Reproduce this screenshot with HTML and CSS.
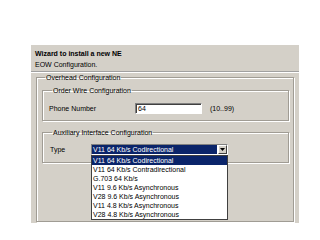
FILE: index.html
```html
<!DOCTYPE html>
<html>
<head>
<meta charset="utf-8">
<link rel="stylesheet" href="styles.css">
</head>
<body>
<div class="panel">
  <div class="header">
    <div class="title">Wizard to install a new NE</div>
    <div class="sub">EOW Configuration.</div>
  </div>
  <div class="sep"></div>
  <fieldset class="group outer">
    <legend>Overhead Configuration</legend>
    <fieldset class="group inner first">
      <legend>Order Wire Configuration</legend>
      <div class="row">
        <span class="label">Phone Number</span>
        <div class="input">64</div>
        <span class="range">(10..99)</span>
      </div>
    </fieldset>
    <fieldset class="group inner second">
      <legend>Auxiliary Interface Configuration</legend>
      <div class="row">
        <span class="label type">Type</span>
        <div class="combo">
          <div class="combo-value">V11 64 Kb/s Codirectional</div>
          <div class="combo-btn"><svg width="5" height="3" viewBox="0 0 5 3"><path d="M0 0H5L2.5 3Z" fill="#000"/></svg></div>
          <ul class="combo-list">
            <li class="sel">V11 64 Kb/s Codirectional</li>
            <li>V11 64 Kb/s Contradirectional</li>
            <li>G.703 64 Kb/s</li>
            <li>V11 9.6 Kb/s Asynchronous</li>
            <li>V28 9.6 Kb/s Asynchronous</li>
            <li>V11 4.8 Kb/s Asynchronous</li>
            <li>V28 4.8 Kb/s Asynchronous</li>
          </ul>
        </div>
      </div>
    </fieldset>
  </fieldset>
</div>
</body>
</html>
```

FILE: styles.css
```css
html, body {
  margin: 0;
  padding: 0;
  background: #ffffff;
}
body {
  font-family: "Liberation Sans", Arial, sans-serif;
  font-size: 7px;
  line-height: 9px;
  color: #000;
}
.panel {
  margin: 45px 0 0 31px;
  width: 268px;
  height: 178px;
  background: #d4d0c8;
  overflow: hidden;
}
.header {
  padding: 4px 0 0 4px;
}
.title {
  font-weight: bold;
}
.sub {
  margin-top: 2px;
}
.sep {
  margin-top: 2px;
  border-top: 1px solid #a0a0a0;
  border-bottom: 1px solid #ffffff;
}
.group {
  margin: 0;
  border: 1px solid #a09c94;
  box-shadow: inset 1px 1px 0 #ffffff, 1px 1px 0 #ffffff;
  min-width: 0;
}
.group legend {
  padding: 0 1px;
  margin-left: 3px;
  line-height: 9px;
}
.outer {
  margin: 0 5px 0 5px;
  padding: 4px 4px 0 5px;
  height: 149px;
  box-sizing: border-box;
}
.inner {
  padding: 8px 6px 6px 6px;
}
.second {
  margin-top: 7px;
  padding-top: 7px;
  padding-bottom: 7px;
}
.row {
  display: flex;
  align-items: center;
  height: 11px;
}
.label {
  width: 86px;
}
.label.type {
  width: 41px;
  padding-left: 1px;
}
.input {
  width: 67px;
  height: 11px;
  box-sizing: border-box;
  background: #fff;
  border: 1px solid;
  border-color: #808080 #ffffff #ffffff #808080;
  box-shadow: inset 1px 1px 0 #404040;
  padding-left: 2px;
  line-height: 9px;
}
.range {
  margin-left: 8px;
}
.combo {
  position: relative;
  width: 137px;
  height: 11px;
  box-sizing: border-box;
  display: flex;
  border: 1px solid;
  border-color: #808080 #ffffff #ffffff #808080;
  background: #fff;
}
.combo-value {
  flex: 1;
  background: #0a246a;
  color: #fff;
  padding-left: 1px;
  line-height: 9px;
  margin: 0 1px 0 0;
}
.combo-btn {
  width: 9px;
  background: #d4d0c8;
  border: 1px solid;
  border-color: #ffffff #404040 #404040 #ffffff;
  box-sizing: border-box;
  display: flex;
  align-items: center;
  justify-content: center;
}
.combo-list {
  position: absolute;
  top: 10px;
  left: -1px;
  width: 137px;
  box-sizing: border-box;
  margin: 0;
  padding: 0;
  list-style: none;
  background: #fff;
  border: 1px solid #404040;
}
.combo-list li {
  height: 9px;
  line-height: 9px;
  padding-left: 1px;
  white-space: nowrap;
}
.combo-list li.sel {
  background: #0a246a;
  color: #fff;
}
```
